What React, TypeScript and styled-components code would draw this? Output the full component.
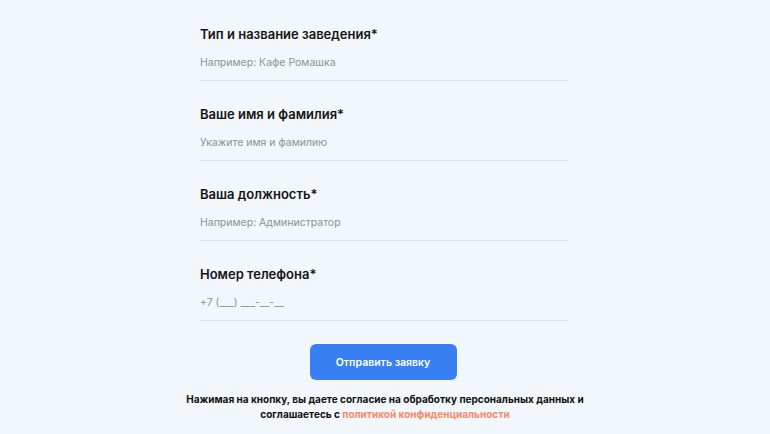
import styled, { createGlobalStyle } from "styled-components";

const GlobalStyle = createGlobalStyle`
  body {
    margin: 0;
    background: #f1f7fa;
    font-family: Inter, "Noto Sans", sans-serif;
  }
`;

const Page = styled.div`
  width: 770px;
  height: 434px;
  display: flex;
  flex-direction: column;
  align-items: center;
  overflow: hidden;
`;

const Form = styled.form`
  width: 368px;
  margin-right: 2px;
  padding-top: 24px;
  display: flex;
  flex-direction: column;
  gap: 23px;
`;

const Field = styled.label`
  display: flex;
  flex-direction: column;
`;

const Label = styled.span`
  font-size: 13px;
  line-height: 20px;
  font-weight: 600;
  color: #141414;
`;

const Input = styled.input`
  margin-top: 8px;
  height: 20px;
  padding: 0 0 8px;
  border: none;
  border-bottom: 1px solid #dde3e6;
  background: transparent;
  font-family: inherit;
  font-size: 10.5px;
  color: #333;
  outline: none;

  &::placeholder {
    color: #8d9296;
  }
`;

const Button = styled.button`
  margin-top: 23px;
  margin-right: 4px;
  width: 147px;
  height: 36px;
  border: none;
  border-radius: 6px;
  background: #3a80f5;
  color: #fff;
  font-family: inherit;
  font-size: 10.5px;
  font-weight: 600;
  cursor: pointer;
`;

const Note = styled.p`
  margin: 12px 0 0;
  width: 420px;
  text-align: center;
  font-size: 10px;
  line-height: 15px;
  font-weight: 700;
  color: #111;
`;

const Link = styled.a`
  color: #f58a6b;
  text-decoration: none;
`;

const fields = [
  { label: "Тип и название заведения*", placeholder: "Например: Кафе Ромашка" },
  { label: "Ваше имя и фамилия*", placeholder: "Укажите имя и фамилию" },
  { label: "Ваша должность*", placeholder: "Например: Администратор" },
  { label: "Номер телефона*", placeholder: "+7 (___) ___-__-__" },
];

export default function App() {
  return (
    <Page>
      <GlobalStyle />
      <Form onSubmit={(e) => e.preventDefault()}>
        {fields.map((f) => (
          <Field key={f.label}>
            <Label>{f.label}</Label>
            <Input placeholder={f.placeholder} />
          </Field>
        ))}
      </Form>
      <Button type="button">Отправить заявку</Button>
      <Note>
        Нажимая на кнопку, вы даете согласие на обработку персональных данных и
        соглашаетесь с <Link href="#">политикой конфиденциальности</Link>
      </Note>
    </Page>
  );
}
